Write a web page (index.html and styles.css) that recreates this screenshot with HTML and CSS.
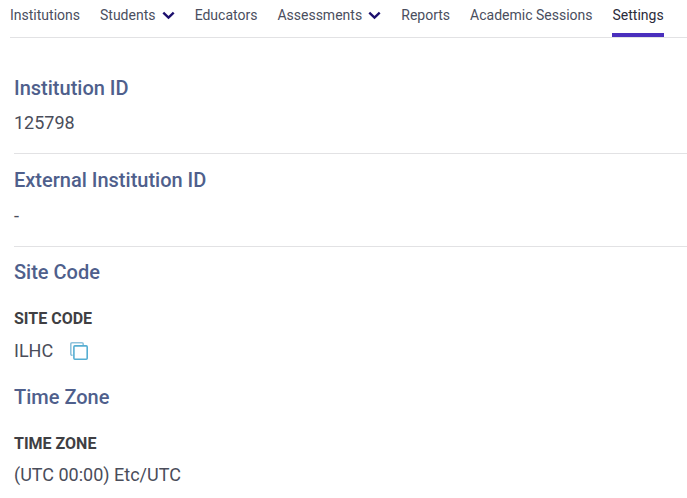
FILE: index.html
```html
<!DOCTYPE html>
<html lang="en">
<head>
<meta charset="utf-8">
<title>Settings</title>
<link rel="stylesheet" href="styles.css">
</head>
<body>
<nav class="tabs">
  <a class="tab">Institutions</a>
  <a class="tab">Students <svg class="chev" viewBox="0 0 12 8"><path d="M1.2 1.4 6 6 10.8 1.4" /></svg></a>
  <a class="tab">Educators</a>
  <a class="tab">Assessments <svg class="chev" viewBox="0 0 12 8"><path d="M1.2 1.4 6 6 10.8 1.4" /></svg></a>
  <a class="tab">Reports</a>
  <a class="tab">Academic Sessions</a>
  <a class="tab active">Settings</a>
</nav>
<main class="content">
  <section class="block first ruled">
    <h2 class="heading">Institution ID</h2>
    <p class="value">125798</p>
  </section>
  <section class="block second ruled">
    <h2 class="heading">External Institution ID</h2>
    <p class="value">-</p>
  </section>
  <section class="block third">
    <h2 class="heading">Site Code</h2>
    <h3 class="label">SITE CODE</h3>
    <p class="value tight row">ILHC
      <svg class="copy" viewBox="0 0 18 18"><path class="back" d="M2.6 13.2H2A1.2 1.2 0 0 1 .8 12V2A1.2 1.2 0 0 1 2 .8H12A1.2 1.2 0 0 1 13.2 2V3"/><rect x="3.9" y="3.9" width="13.3" height="13.3" rx="1"/></svg>
    </p>
  </section>
  <section class="block fourth">
    <h2 class="heading">Time Zone</h2>
    <h3 class="label">TIME ZONE</h3>
    <p class="value tight">(UTC 00:00) Etc/UTC</p>
  </section>
</main>
</body>
</html>
```
FILE: styles.css
```css
* { box-sizing: border-box; }
html, body { margin: 0; padding: 0; background: #fff; overflow: hidden; }
body {
  width: 687px;
  height: 498px;
  font-family: Roboto, "Liberation Sans", sans-serif;
  color: #42454f;
}
.tabs {
  display: flex;
  gap: 20px;
  margin-left: 10px;
  height: 38px;
  border-bottom: 1px solid #e2e2e4;
}
.tab {
  display: block;
  height: 37px;
  padding-top: 7px;
  font-size: 14px;
  line-height: 17px;
  color: #4a4e5e;
  white-space: nowrap;
}
.tab.active {
  color: #2b2b3a;
  border-bottom: 4px solid #4a2fbd;
}
.chev {
  width: 13px;
  height: 9px;
  margin-left: 2.7px;
  fill: none;
  stroke: #1c0f6e;
  stroke-width: 2.2;
}
.content { margin-left: 14px; }
.ruled { border-bottom: 1px solid #e2e2e4; }
.first { padding: 38px 0 19px; }
.second { padding: 14px 0 19px; }
.second .value { margin-top: 13px; }
.third { padding-top: 13px; }
.fourth { padding-top: 23px; }
.heading {
  margin: 0;
  font-size: 20px;
  line-height: 24px;
  font-weight: 500;
  color: #4f5f8c;
}
.label {
  margin: 25px 0 0;
  font-size: 16px;
  line-height: 20px;
  font-weight: 700;
  color: #3f3f43;
}
.value {
  margin: 12px 0 0;
  font-size: 18px;
  line-height: 22px;
  color: #4a4d5a;
}
.value.tight { margin-top: 11px; }
.fourth .value.tight { margin-top: 10px; }
.row { display: flex; align-items: center; gap: 16.5px; }
.copy {
  width: 18px;
  height: 18px;
  fill: none;
  stroke: #55aed2;
  stroke-width: 1.6;
}
.copy .back { stroke: #8fc3dc; }
```
